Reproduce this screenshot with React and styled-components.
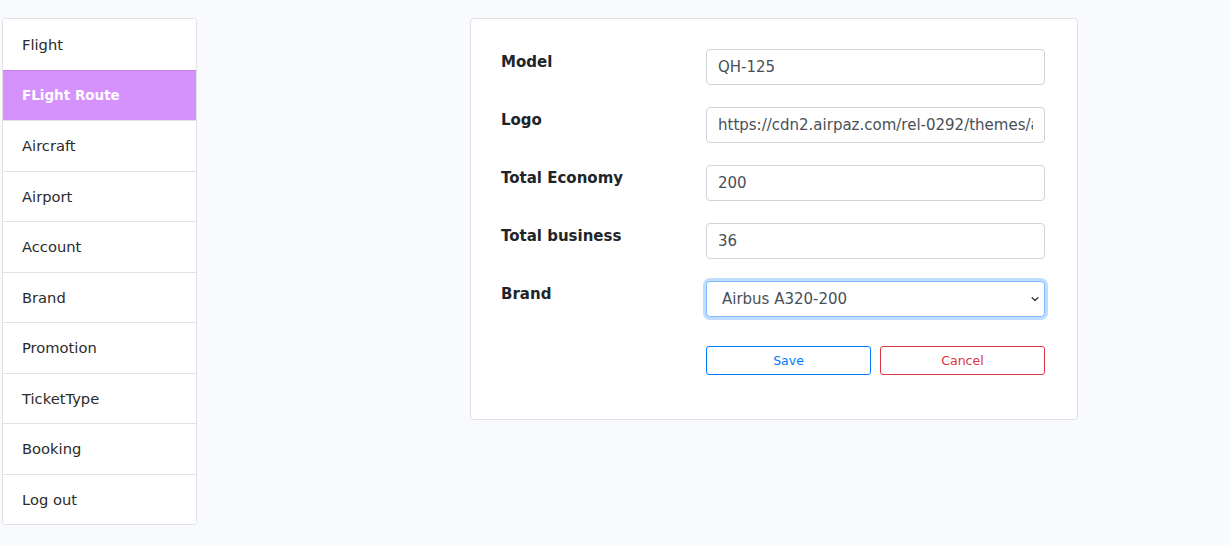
import React from "react";
import styled, { createGlobalStyle } from "styled-components";

const GlobalStyle = createGlobalStyle`
  html, body {
    margin: 0;
    padding: 0;
    background: #f9fafe;
    font-family: "DejaVu Sans", "Open Sans", sans-serif;
  }
  * { box-sizing: border-box; }
`;

const menu = [
  "Flight",
  "FLight Route",
  "Aircraft",
  "Airport",
  "Account",
  "Brand",
  "Promotion",
  "TicketType",
  "Booking",
  "Log out",
];

const App = () => {
  return (
    <>
      <GlobalStyle />
      <Page>
        <Sidebar>
          {menu.map((item) => (
            <NavItem key={item} active={item === "FLight Route"}>
              {item}
            </NavItem>
          ))}
        </Sidebar>

        <Card>
          <Row>
            <Label>Model</Label>
            <Input defaultValue="QH-125" />
          </Row>
          <Row>
            <Label>Logo</Label>
            <Input defaultValue="https://cdn2.airpaz.com/rel-0292/themes/airpaz/images/airlines/QH.png" />
          </Row>
          <Row>
            <Label>Total Economy</Label>
            <Input defaultValue="200" />
          </Row>
          <Row>
            <Label>Total business</Label>
            <Input defaultValue="36" />
          </Row>
          <Row>
            <Label>Brand</Label>
            <SelectWrap>
              <Select defaultValue="a320">
                <option value="a320">Airbus A320-200</option>
                <option value="a321">Airbus A321</option>
                <option value="b737">Boeing 737-800</option>
              </Select>
              <Chevron viewBox="0 0 16 16">
                <path d="M3.5 6l4.5 4.5L12.5 6" fill="none" stroke="#343a40" strokeWidth="2.2" strokeLinecap="round" strokeLinejoin="round" />
              </Chevron>
            </SelectWrap>
          </Row>
          <Actions>
            <span />
            <Buttons>
              <OutlineButton color="#007bff">Save</OutlineButton>
              <OutlineButton color="#dc3545">Cancel</OutlineButton>
            </Buttons>
          </Actions>
        </Card>
      </Page>
    </>
  );
};

const Page = styled.div`
  display: flex;
  align-items: flex-start;
  gap: 273px;
  padding: 18px 0 0 2px;
  min-height: 545px;
`;

const Sidebar = styled.div`
  width: 195px;
  display: flex;
  flex-direction: column;
  background: #fff;
  border: 1px solid #dfe1e5;
  border-radius: 4px;
  overflow: hidden;
`;

const NavItem = styled.div`
  height: 50.5px;
  display: flex;
  align-items: center;
  padding: 0 19px;
  font-size: ${(p) => (p.active ? "13.5px" : "14.7px")};
  color: ${(p) => (p.active ? "#fff" : "#2b2b2b")};
  font-weight: ${(p) => (p.active ? 700 : 400)};
  background: ${(p) => (p.active ? "#d591fc" : "#fff")};
  border-top: 1px solid ${(p) => (p.active ? "#c77ff0" : "#dfe1e5")};
  &:first-child {
    border-top: none;
  }
`;

const Card = styled.div`
  width: 608px;
  background: #fff;
  border: 1px solid #dfe1e5;
  border-radius: 4px;
  padding: 30px 32px 44px 30px;
  display: flex;
  flex-direction: column;
  gap: 22px;
`;

const Row = styled.div`
  display: grid;
  grid-template-columns: 205px 1fr;
  align-items: start;
`;

const Label = styled.div`
  font-size: 15px;
  font-weight: 700;
  color: #212529;
  padding-top: 2px;
  line-height: 22px;
`;

const Input = styled.input`
  height: 36px;
  width: 100%;
  border: 1px solid #ced4da;
  border-radius: 4px;
  padding: 0 11px;
  font-family: inherit;
  font-size: 15px;
  color: #495057;
  background: #fff;
  outline: none;
`;

const SelectWrap = styled.div`
  position: relative;
`;

const Select = styled.select`
  height: 36px;
  width: 100%;
  appearance: none;
  border: 1px solid #80bdff;
  box-shadow: 0 0 0 3px rgba(0, 123, 255, 0.25);
  border-radius: 4px;
  padding: 0 30px 0 15px;
  font-family: inherit;
  font-size: 15px;
  color: #495057;
  background: #fff;
  outline: none;
`;

const Chevron = styled.svg`
  position: absolute;
  right: 5px;
  top: 13px;
  width: 10px;
  height: 10px;
  pointer-events: none;
`;

const Actions = styled.div`
  display: grid;
  grid-template-columns: 205px 1fr;
  margin-top: 7px;
`;

const Buttons = styled.div`
  display: grid;
  grid-template-columns: 1fr 1fr;
  gap: 9px;
`;

const OutlineButton = styled.button`
  height: 29px;
  border: 1px solid ${(p) => p.color};
  color: ${(p) => p.color};
  background: transparent;
  border-radius: 3px;
  font-family: inherit;
  font-size: 12.5px;
  cursor: pointer;
`;

export default App;
